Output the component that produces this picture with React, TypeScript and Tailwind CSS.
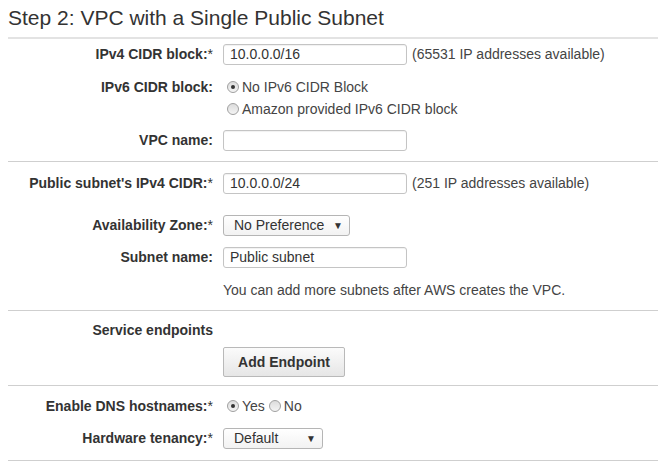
import React from 'react'

const Label = ({ text, req }: { text: string; req?: boolean }) => (
  <div className="w-[205px] shrink-0 text-right text-[14px] font-bold text-[#333]">
    {text}
    {req && <span className="font-normal">*</span>}
  </div>
)

const Row = ({ label, req, className, children }: { label?: string; req?: boolean; className: string; children?: React.ReactNode }) => (
  <div className={`flex items-center gap-[10px] ${className}`}>
    {label ? <Label text={label} req={req} /> : <div className="w-[205px] shrink-0" />}
    <div className="flex items-center">{children}</div>
  </div>
)

const TextBox = ({ value }: { value?: string }) => (
  <div className="flex h-[21px] w-[184px] items-center rounded-[3px] border border-[#c4c4c4] bg-white pl-[6px] text-[14px] text-[#333] shadow-[inset_0_1px_1px_rgba(0,0,0,0.06)]">
    {value}
  </div>
)

const Select = ({ value, w }: { value: string; w: string }) => (
  <div className={`flex h-[21px] items-center justify-between rounded-[3px] border border-[#b5b5b5] bg-gradient-to-b from-white to-[#f2f2f2] pl-[10px] pr-[6px] text-[14px] text-[#333] ${w}`}>
    <span>{value}</span>
    <span className="text-[10px] leading-none text-[#333]">▼</span>
  </div>
)

const Radio = ({ on }: { on?: boolean }) => (
  <span className="mr-[3px] flex h-[12px] w-[12px] items-center justify-center rounded-full border border-[#a0a0a0] bg-gradient-to-b from-[#dcdcdc] to-[#f4f4f4]">
    {on && <span className="h-[4px] w-[4px] rounded-full bg-[#333]" />}
  </span>
)

export default function App() {
  return (
    <div className="w-[658px] bg-white pl-2 text-[#444]" style={{ fontFamily: '"Liberation Sans", Arial, sans-serif' }}>
      <h2 className="border-b-2 border-[#e3e3e3] pb-[7px] pt-[6px] text-[21px] leading-[24px] text-[#333]">
        Step 2: VPC with a Single Public Subnet
      </h2>

      <div className="border-b border-[#cfcfcf] pb-[10px]">
        <Row label="IPv4 CIDR block:" req className="mt-[5px] h-[21px]">
          <TextBox value="10.0.0.0/16" />
          <span className="ml-[5px] text-[14px]">(65531 IP addresses available)</span>
        </Row>
        <Row label="IPv6 CIDR block:" className="mt-[11px] h-[22px]">
          <span className="ml-[4px] flex items-center text-[14px]">
            <Radio on />
            No IPv6 CIDR Block
          </span>
        </Row>
        <Row className="h-[22px]">
          <span className="ml-[4px] flex items-center text-[14px]">
            <Radio />
            Amazon provided IPv6 CIDR block
          </span>
        </Row>
        <Row label="VPC name:" className="mt-[10px] h-[21px]">
          <TextBox />
        </Row>
      </div>

      <div className="border-b border-[#cfcfcf] pb-[10px]">
        <Row label="Public subnet's IPv4 CIDR:" req className="mt-[11px] h-[21px]">
          <TextBox value="10.0.0.0/24" />
          <span className="ml-[5px] text-[14px]">(251 IP addresses available)</span>
        </Row>
        <Row label="Availability Zone:" req className="mt-[21px] h-[21px]">
          <Select value="No Preference" w="w-[127px]" />
        </Row>
        <Row label="Subnet name:" className="mt-[11px] h-[21px]">
          <TextBox value="Public subnet" />
        </Row>
        <Row className="mt-[12px] h-[20px]">
          <span className="text-[14px]">You can add more subnets after AWS creates the VPC.</span>
        </Row>
      </div>

      <div className="border-b border-[#cfcfcf] pb-[8px]">
        <Row label="Service endpoints" className="mt-[9px] h-[20px]" />
        <Row className="mt-[7px] h-[30px]">
          <button className="h-[30px] w-[122px] rounded-[2px] border border-[#b9b9b9] bg-gradient-to-b from-[#fbfbfb] to-[#e6e6e6] text-[14px] font-bold text-[#333]">
            Add Endpoint
          </button>
        </Row>
      </div>

      <div className="border-b border-[#cfcfcf] pb-[11px]">
        <Row label="Enable DNS hostnames:" req className="mt-[10px] h-[20px]">
          <span className="ml-[4px] flex items-center text-[14px]">
            <Radio on />
            Yes
            <span className="ml-[4px] flex items-center">
              <Radio />
              No
            </span>
          </span>
        </Row>
        <Row label="Hardware tenancy:" req className="mt-[12px] h-[21px]">
          <Select value="Default" w="w-[100px]" />
        </Row>
      </div>
    </div>
  )
}
